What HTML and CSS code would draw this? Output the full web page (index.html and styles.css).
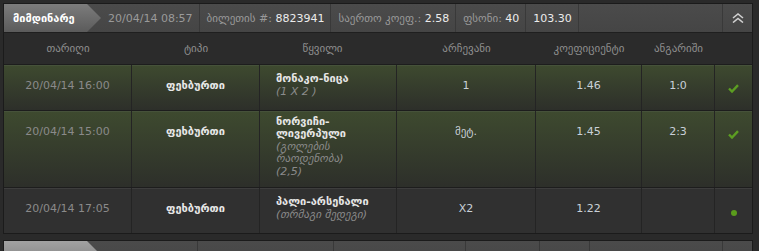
FILE: index.html
```html
<!DOCTYPE html>
<html lang="ka">
<head>
<meta charset="utf-8">
<title>ბილეთები</title>
<link rel="stylesheet" href="styles.css">
</head>
<body>
<div class="panel">
  <div class="bar">
    <div class="tab">მიმდინარე</div>
    <div class="cell">20/04/14 08:57</div>
    <div class="cell"><span class="lbl">ბილეთის #:</span>&nbsp;<span class="val">8823941</span></div>
    <div class="cell"><span class="lbl">საერთო კოეფ.:</span>&nbsp;<span class="val">2.58</span></div>
    <div class="cell"><span class="lbl">ფსონი:</span>&nbsp;<span class="val">40</span></div>
    <div class="cell"><span class="val">103.30</span></div>
    <div class="fill"></div>
    <div class="toggle">
      <svg width="12" height="10" viewBox="0 0 12 10"><path d="M1 5 L6 1 L11 5 M1 9.5 L6 5.5 L11 9.5" fill="none" stroke="#d0d0d0" stroke-width="1.6"/></svg>
    </div>
  </div>
  <div class="thead">
    <div>თარიღი</div>
    <div>ტიპი</div>
    <div class="th-ev">წყვილი</div>
    <div>არჩევანი</div>
    <div>კოეფიციენტი</div>
    <div>ანგარიში</div>
    <div></div>
  </div>
  <div class="row won">
    <div class="date">20/04/14 16:00</div>
    <div class="type">ფეხბურთი</div>
    <div class="ev"><span class="name">მონაკო-ნიცა</span><span class="sub">(1 X 2 )</span></div>
    <div class="num">1</div>
    <div class="num">1.46</div>
    <div class="num">1:0</div>
    <div class="status"><svg width="11" height="9" viewBox="0 0 11 9"><path d="M1 4.5 L4 7.5 L10 1.2" fill="none" stroke="#5c9e22" stroke-width="2.4"/></svg></div>
  </div>
  <div class="row won">
    <div class="date">20/04/14 15:00</div>
    <div class="type">ფეხბურთი</div>
    <div class="ev"><span class="name">ნორვიჩი-ლივერპული</span><span class="sub">(გოლების რაოდენობა)</span><span class="sub">(2,5)</span></div>
    <div class="num">მეტ.</div>
    <div class="num">1.45</div>
    <div class="num">2:3</div>
    <div class="status"><svg width="11" height="9" viewBox="0 0 11 9"><path d="M1 4.5 L4 7.5 L10 1.2" fill="none" stroke="#5c9e22" stroke-width="2.4"/></svg></div>
  </div>
  <div class="row open">
    <div class="date">20/04/14 17:05</div>
    <div class="type">ფეხბურთი</div>
    <div class="ev"><span class="name">პალი-არსენალი</span><span class="sub">(თრმაგი შედეგი)</span></div>
    <div class="num">X2</div>
    <div class="num">1.22</div>
    <div class="num"></div>
    <div class="status"><span class="dot"></span></div>
  </div>
</div>
<div class="panel">
  <div class="bar">
    <div class="tab tab2"></div>
    <div class="cell c1"></div>
    <div class="cell c2"></div>
    <div class="cell c3"></div>
    <div class="cell c4"></div>
    <div class="cell c5"></div>
    <div class="fill"></div>
    <div class="toggle"></div>
  </div>
</div>
</body>
</html>
```
FILE: styles.css
```css
html, body {
  margin: 0;
  height: 100%;
  overflow: hidden;
}
body {
  padding: 3px 0 0 3px;
  background: #2a2a2a;
  font-family: "DejaVu Sans", sans-serif;
  font-size: 11px;
  line-height: 13px;
  color: #c8c8c8;
}
.panel {
  width: 748px;
  border: 1px solid #1b1b1b;
  background: #2c2c2c;
  margin-bottom: 6px;
}
.bar {
  display: flex;
  height: 28px;
  background: linear-gradient(#4b4b4b, #454545);
  border-bottom: 1px solid #1f1f1f;
}
.tab {
  flex: none;
  width: 97px;
  box-sizing: border-box;
  padding-left: 9px;
  display: flex;
  align-items: center;
  color: #ffffff;
  font-weight: bold;
  background: linear-gradient(#7c7c7c, #5b5b5b);
  clip-path: polygon(0 0, 83px 0, 97px 50%, 83px 100%, 0 100%);
}
.tab2 {
  background: linear-gradient(#a2a2a2, #7a7a7a);
}
.bar .cell {
  display: flex;
  align-items: center;
  padding: 0 6px 0 7px;
  border-right: 1px solid #393939;
  white-space: nowrap;
  color: #9a9a9a;
}
.bar .c1 { width: 96px; padding: 0; }
.bar .c2 { width: 135px; padding: 0; }
.bar .c3 { width: 131px; padding: 0; }
.bar .c4 { width: 73px; padding: 0; }
.bar .c5 { width: 49px; padding: 0; }
.val {
  color: #ececec;
}
.fill {
  flex: 1;
  border-right: 1px solid #393939;
}
.toggle {
  flex: none;
  width: 29px;
  display: flex;
  align-items: center;
  justify-content: center;
}
.thead {
  display: grid;
  grid-template-columns: 128px 128px 137px 139px 106px 73px 37px;
  height: 31px;
  background: #2b2b2b;
}
.thead > div {
  display: flex;
  align-items: center;
  justify-content: center;
  color: #8e8e8e;
}
.thead > .th-ev {
  padding-right: 12px;
}
.row {
  display: grid;
  grid-template-columns: 128px 128px 137px 139px 106px 73px 37px;
  min-height: 45px;
  border-top: 1px solid #1d1d1d;
}
.row.won {
  background: linear-gradient(#3e4a2f, #2d2f2a);
  box-shadow: inset 0 1px 0 #46523a;
}
.row.open {
  background: #303030;
  box-shadow: inset 0 1px 0 #3d3d3d;
}
.row > div {
  border-right: 1px solid #242424;
  padding-top: 14px;
  text-align: center;
}
.row > div:last-child {
  border-right: 0;
}
.date {
  color: #8a8a8a;
}
.type {
  color: #e8e8e8;
  font-weight: bold;
}
.num {
  color: #c9d0d8;
}
.row > .ev {
  text-align: left;
  padding: 5px 4px 9px 16px;
  display: flex;
  flex-direction: column;
  justify-content: center;
  line-height: 12.4px;
}
.name {
  color: #e6e6e6;
  font-weight: bold;
}
.sub {
  color: #8b8b8b;
  font-style: italic;
}
.row > .status {
  padding-top: 18px;
}
.dot {
  display: inline-block;
  width: 6px;
  height: 6px;
  margin-top: 2px;
  border-radius: 50%;
  background: #5a9c1c;
}
```
